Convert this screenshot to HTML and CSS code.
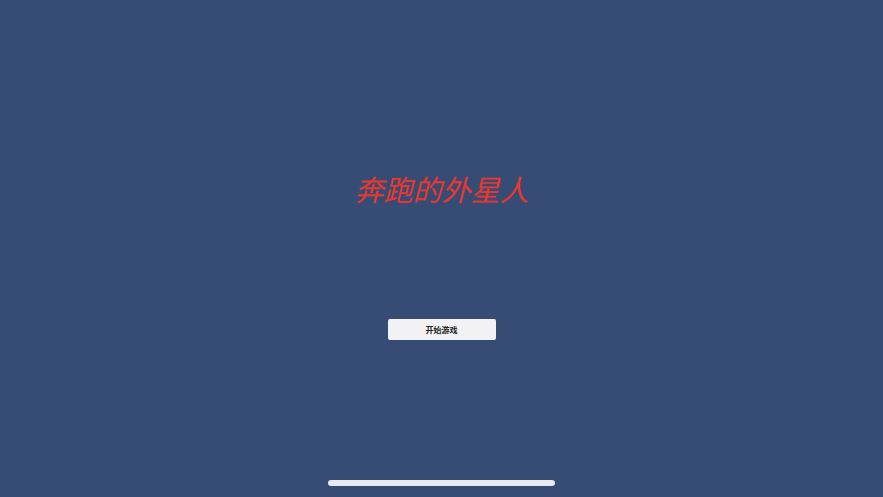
FILE: index.html
```html
<!DOCTYPE html>
<html lang="zh-CN">
<head>
    <meta charset="UTF-8">
    <meta name="viewport" content="width=device-width, initial-scale=1.0">
    <title>奔跑的外星人</title>
    <link rel="stylesheet" href="styles.css">
</head>
<body>
    <div class="screen">
        <h1 class="title">奔跑的外星人</h1>
        <button class="start-btn">开始游戏</button>
        <div class="home-bar"></div>
    </div>
</body>
</html>
```

FILE: styles.css
```css
html, body {
    margin: 0;
    padding: 0;
    height: 100%;
}
body {
    background-color: #374c74;
    font-family: "Noto Sans CJK SC", "Noto Sans", sans-serif;
    overflow: hidden;
}
.screen {
    height: 497px;
    display: flex;
    flex-direction: column;
    align-items: center;
}
.title {
    margin: 167px 0 0 0;
    font-size: 29px;
    line-height: 42px;
    font-weight: normal;
    font-style: italic;
    color: #e8372c;
}
.start-btn {
    margin-top: 110px;
    width: 108px;
    height: 21px;
    padding: 0;
    border: none;
    border-radius: 2px;
    background-color: #f2f2f4;
    color: #222;
    font-family: "Noto Sans CJK SC", sans-serif;
    font-size: 8px;
    font-weight: bold;
    cursor: pointer;
}
.home-bar {
    margin-top: 140px;
    width: 227px;
    height: 6px;
    border-radius: 3px;
    background-color: #e9ebf2;
}
```
